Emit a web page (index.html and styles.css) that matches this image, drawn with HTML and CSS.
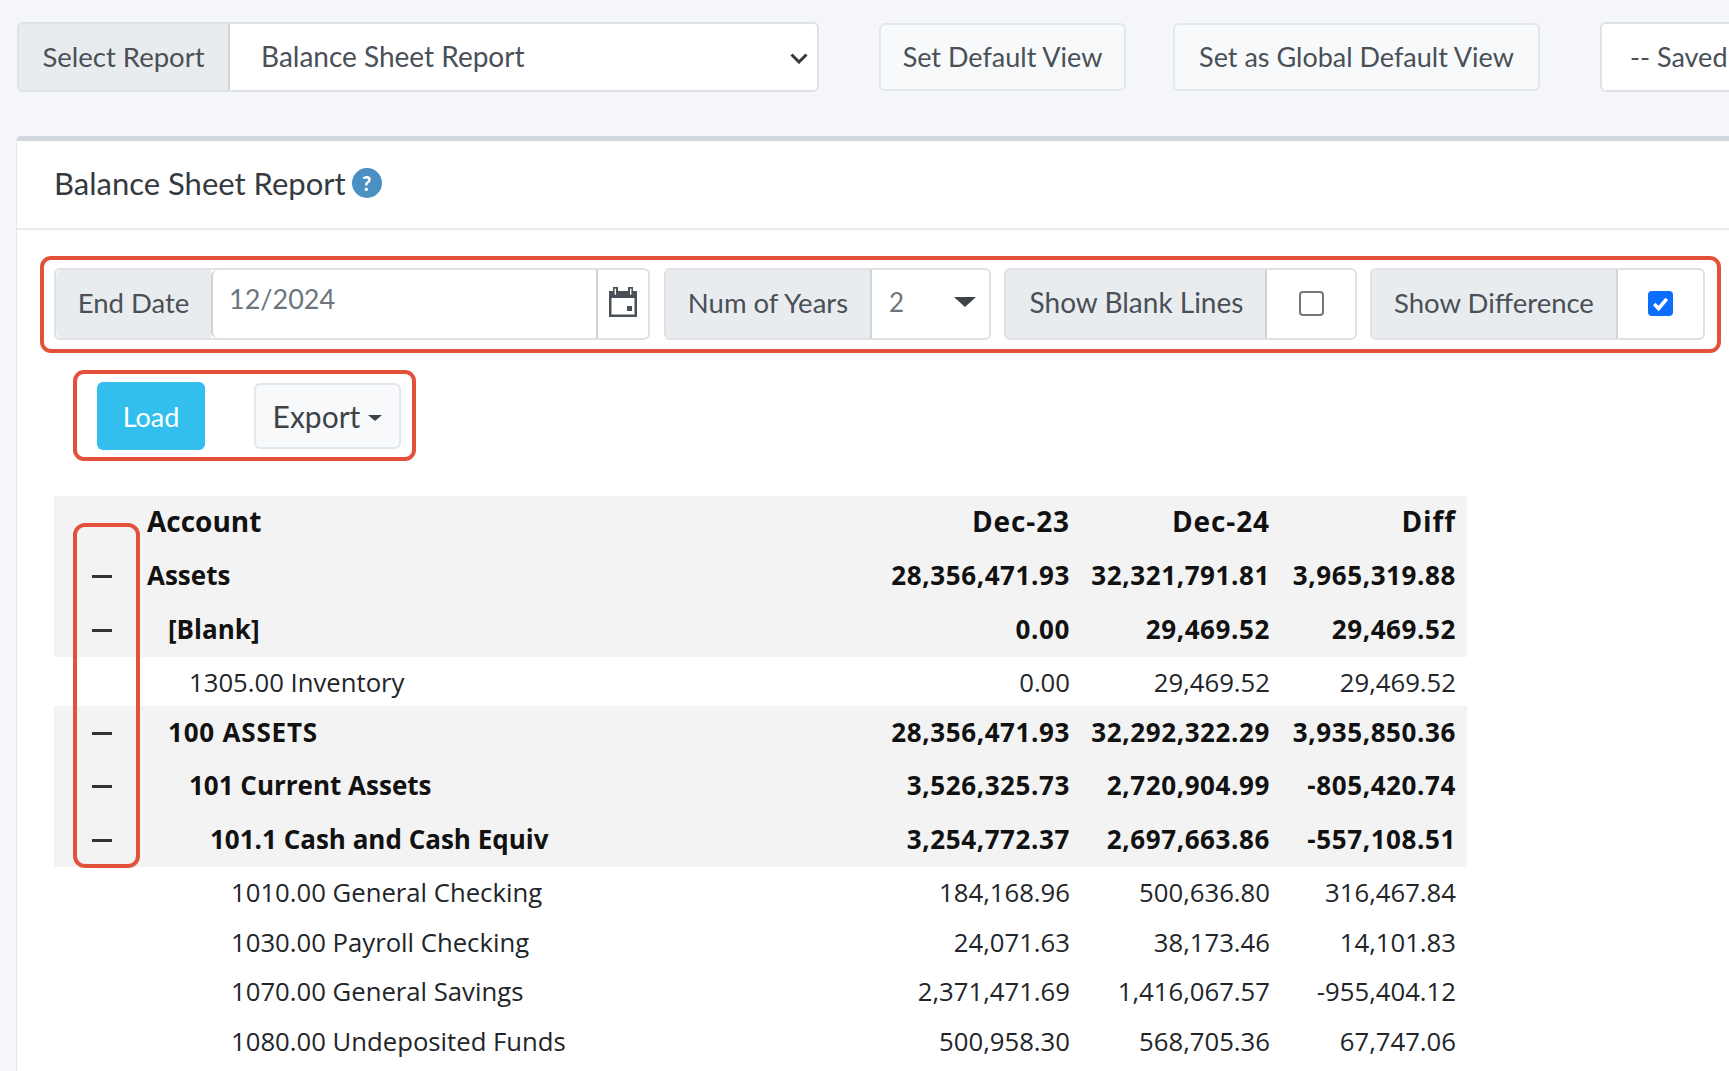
FILE: index.html
```html
<!DOCTYPE html>
<html lang="en">
<head>
<meta charset="utf-8">
<title>Balance Sheet Report</title>
<link rel="stylesheet" href="styles.css">
</head>
<body>
<div class="toolbar">
  <div class="group report-group">
    <span class="addon">Select Report</span>
    <span class="report-select">Balance Sheet Report
      <svg class="chev" viewBox="0 0 18 11" width="18" height="11"><path d="M1.5 1.5 9 9l7.5-7.5" fill="none" stroke="#343a40" stroke-width="3"/></svg>
    </span>
  </div>
  <button class="tool-btn default-btn">Set Default View</button>
  <button class="tool-btn global-btn">Set as Global Default View</button>
  <div class="saved">-- Saved</div>
</div>
<main class="card">
  <header class="card-head">
    <h1>Balance Sheet Report</h1>
    <span class="help">?</span>
  </header>
  <div class="card-body">
    <div class="filters">
      <div class="group end-date">
        <span class="addon">End Date</span>
        <span class="date-input">12/2024</span>
        <span class="cal-addon">
          <svg viewBox="0 0 28 30" width="28" height="30"><path d="M0 4h4V0h5v4h10V0h5v4h4v26H0z" fill="#495057"/><rect x="2.5" y="11" width="23" height="16.5" fill="#fff"/><rect x="5.6" y="1.6" width="1.4" height="6" fill="#fff"/><rect x="21" y="1.6" width="1.4" height="6" fill="#fff"/><rect x="18" y="19" width="5" height="5" fill="#495057"/></svg>
        </span>
      </div>
      <div class="group years">
        <span class="addon">Num of Years</span>
        <span class="years-select">2<i class="big-caret"></i></span>
      </div>
      <div class="group blank">
        <span class="addon">Show Blank Lines</span>
        <span class="check-cell"><i class="check"></i></span>
      </div>
      <div class="group diff">
        <span class="addon">Show Difference</span>
        <span class="check-cell"><i class="check on"><svg viewBox="0 0 24 24" width="25" height="25"><path d="M6 12.5l4.2 4.3L18 7.5" fill="none" stroke="#fff" stroke-width="3.4"/></svg></i></span>
      </div>
    </div>
    <div class="actions">
      <button class="load">Load</button>
      <button class="export">Export<i class="small-caret"></i></button>
    </div>
    <table class="report">
      <colgroup><col class="c-tog"><col class="c-acc"><col class="c-n1"><col class="c-n2"><col class="c-n3"></colgroup>
      <thead>
        <tr class="sum head"><th></th><th class="left">Account</th><th>Dec-23</th><th>Dec-24</th><th>Diff</th></tr>
      </thead>
      <tbody>
        <tr class="sum"><td class="tog"><i></i></td><td class="acc l0">Assets</td><td>28,356,471.93</td><td>32,321,791.81</td><td>3,965,319.88</td></tr>
        <tr class="sum"><td class="tog"><i></i></td><td class="acc l1">[Blank]</td><td>0.00</td><td>29,469.52</td><td>29,469.52</td></tr>
        <tr class="line"><td></td><td class="acc l2">1305.00 Inventory</td><td>0.00</td><td>29,469.52</td><td>29,469.52</td></tr>
        <tr class="sum"><td class="tog"><i></i></td><td class="acc l1 caps">100 ASSETS</td><td>28,356,471.93</td><td>32,292,322.29</td><td>3,935,850.36</td></tr>
        <tr class="sum"><td class="tog"><i></i></td><td class="acc l2">101 Current Assets</td><td>3,526,325.73</td><td>2,720,904.99</td><td>-805,420.74</td></tr>
        <tr class="sum"><td class="tog"><i></i></td><td class="acc l3">101.1 Cash and Cash Equiv</td><td>3,254,772.37</td><td>2,697,663.86</td><td>-557,108.51</td></tr>
        <tr class="line"><td></td><td class="acc l4">1010.00 General Checking</td><td>184,168.96</td><td>500,636.80</td><td>316,467.84</td></tr>
        <tr class="line"><td></td><td class="acc l4">1030.00 Payroll Checking</td><td>24,071.63</td><td>38,173.46</td><td>14,101.83</td></tr>
        <tr class="line"><td></td><td class="acc l4">1070.00 General Savings</td><td>2,371,471.69</td><td>1,416,067.57</td><td>-955,404.12</td></tr>
        <tr class="line"><td></td><td class="acc l4">1080.00 Undeposited Funds</td><td>500,958.30</td><td>568,705.36</td><td>67,747.06</td></tr>
      </tbody>
    </table>
    <div class="toggle-mark"></div>
  </div>
</main>
</body>
</html>
```
FILE: styles.css
```css
* { box-sizing: border-box; }
html, body { height: 100%; overflow: hidden; }
body {
  margin: 0;
  width: 1729px;
  background: #f4f6f9;
  font-family: "Lato", "Liberation Sans", sans-serif;
  color: #495057;
}
.toolbar {
  display: flex;
  align-items: center;
  height: 136px;
  padding: 0 0 22px 17px;
  white-space: nowrap;
  overflow: hidden;
}
.group {
  display: flex;
  border: 2px solid #dee2e6;
  border-radius: 6px;
  background: #fff;
  overflow: hidden;
  font-size: 27.5px;
}
.addon {
  display: flex;
  align-items: center;
  justify-content: center;
  background: #e9ecef;
  border-right: 2px solid #ced4da;
}
.report-group { width: 802px; height: 70px; flex: none; }
.report-group .addon { width: 211px; padding-bottom: 2px; }
.report-select {
  flex: 1;
  display: flex;
  align-items: center;
  justify-content: space-between;
  padding: 0 9px 2px 31px;
  font-size: 28px;
}
.chev { margin-top: 4px; }
.tool-btn {
  height: 68px;
  border: 2px solid #e3e6ea;
  border-radius: 6px;
  background: #f8f9fa;
  color: #495057;
  font: inherit;
  font-size: 27px;
  flex: none;
  padding: 0 0 2px;
}
.default-btn { width: 247px; margin-left: 60px; }
.global-btn { width: 367px; margin-left: 47px; }
.saved {
  flex: none;
  width: 130px;
  height: 70px;
  margin-left: 60px;
  padding: 0 0 2px 28px;
  display: flex;
  align-items: center;
  background: #fff;
  border: 2px solid #dee2e6;
  border-right: 0;
  border-radius: 6px 0 0 6px;
  font-size: 27px;
}
.card {
  margin-left: 16px;
  height: 935px;
  background: #fff;
  border-top: 5px solid #d2d6de;
  border-left: 1px solid #e3e6ea;
  border-radius: 5px 0 0 0;
}
.card-head {
  height: 89px;
  display: flex;
  align-items: center;
  gap: 6px;
  padding: 0 0 3px 37px;
  border-bottom: 2px solid #e9ecef;
}
.card-head h1 {
  margin: 0;
  font-size: 31px;
  font-weight: 400;
  color: #343a40;
}
.help {
  width: 30px;
  height: 30px;
  border-radius: 50%;
  background: #4a90c2;
  color: #fff;
  font-size: 20px;
  font-weight: 900;
  display: flex;
  align-items: center;
  justify-content: center;
}
.card-body { position: relative; padding: 26px 0 0 23px; }
.filters {
  display: flex;
  width: 1681px;
  height: 97px;
  padding: 8px 0 8px 10px;
  border: 4px solid #e4513b;
  border-radius: 11px;
  gap: 14px;
}
.filters .group { height: 72px; }
.filters .addon { padding-bottom: 4px; }
.end-date { width: 596px; }
.end-date .addon { width: 155px; border-right: 0; border-radius: 6px 0 0 6px; }
.date-input {
  flex: 1;
  padding: 12px 0 0 16px;
  color: #6c757d;
  border-left: 2px solid #ced4da;
  border-radius: 6px 0 0 6px;
  font-size: 27px;
}
.cal-addon {
  width: 52px;
  padding-bottom: 4px;
  display: flex;
  align-items: center;
  justify-content: center;
  border-left: 2px solid #ced4da;
}
.years { width: 327px; }
.years .addon { width: 206px; }
.years-select {
  flex: 1;
  display: flex;
  align-items: center;
  justify-content: space-between;
  padding: 0 13px 4px 17px;
  color: #6c757d;
  font-size: 26px;
}
.big-caret {
  width: 0; height: 0;
  border: 11px solid transparent;
  border-top: 10px solid #3d4348;
  border-bottom: 0;
}
.blank { width: 353px; margin-left: -1px; }
.blank .addon { width: 261px; padding-left: 2px; font-size: 28px; }
.diff { width: 335px; margin-left: -1px; }
.diff .addon { width: 246px; }
.check-cell { flex: 1; display: flex; align-items: center; justify-content: center; padding-bottom: 2px; }
.check {
  display: block;
  width: 25px;
  height: 25px;
  border: 2px solid #767676;
  border-radius: 4px;
}
.check.on { background: #0d6efd; border: 0; }
.check svg { display: block; }
.actions {
  display: flex;
  align-items: center;
  gap: 49px;
  width: 343px;
  height: 91px;
  margin: 17px 0 0 33px;
  padding: 0 0 0 20px;
  border: 4px solid #e4513b;
  border-radius: 11px;
}
.load {
  width: 108px;
  height: 68px;
  margin-top: 1px;
  border: 0;
  border-radius: 6px;
  background: #33bfee;
  color: #fff;
  font: inherit;
  font-size: 27px;
}
.export {
  width: 147px;
  height: 66px;
  margin-top: 1px;
  border: 2px solid #e3e6ea;
  border-radius: 6px;
  background: #f8f9fa;
  color: #3d4348;
  font: inherit;
  font-size: 30px;
}
.small-caret {
  display: inline-block;
  width: 0; height: 0;
  margin-left: 8px;
  vertical-align: 7px;
  border: 7px solid transparent;
  border-top: 6px solid #3d4348;
  border-bottom: 0;
}
.report {
  table-layout: fixed;
  border-collapse: collapse;
  width: 1413px;
  margin: 35px 0 0 14px;
  font-family: "Open Sans", "Noto Sans", sans-serif;
  font-size: 25.7px;
  color: #212529;
}
.c-tog { width: 83px; }
.c-acc { width: 650px; }
.c-n1 { width: 293px; }
.c-n2 { width: 200px; }
.c-n3 { width: 187px; }
.report td, .report th { padding: 0 10px 0 0; text-align: right; white-space: nowrap; }
.report td:last-child, .report th:last-child { padding-right: 11px; }
.report .left, .report .acc { text-align: left; padding-left: 10px; }
.report .head th { font-size: 28px; height: 48px; padding-bottom: 3px; letter-spacing: .9px; }
.report .head .left { letter-spacing: 0; }
.sum { background: #f3f3f3; font-weight: 700; height: 53.5px; color: #111; font-size: 26px; }
.sum td { padding-bottom: 2px; letter-spacing: .6px; }
.report .sum .acc { letter-spacing: 0; }
.report .sum .caps { letter-spacing: .8px; }
.line { height: 49.5px; background: #fff; }
.line td { padding-top: 3px; }
.report .l1 { padding-left: 31px; }
.report .l2 { padding-left: 52px; }
.report .l3 { padding-left: 73px; }
.report .l4 { padding-left: 94px; }
.report .tog { padding: 1px 0 0 38px; text-align: left; }
.tog i { display: block; width: 20px; height: 3px; background: #333; }
.toggle-mark {
  position: absolute;
  left: 56px;
  top: 293px;
  width: 67px;
  height: 345px;
  border: 4px solid #e4513b;
  border-radius: 12px;
}
```
